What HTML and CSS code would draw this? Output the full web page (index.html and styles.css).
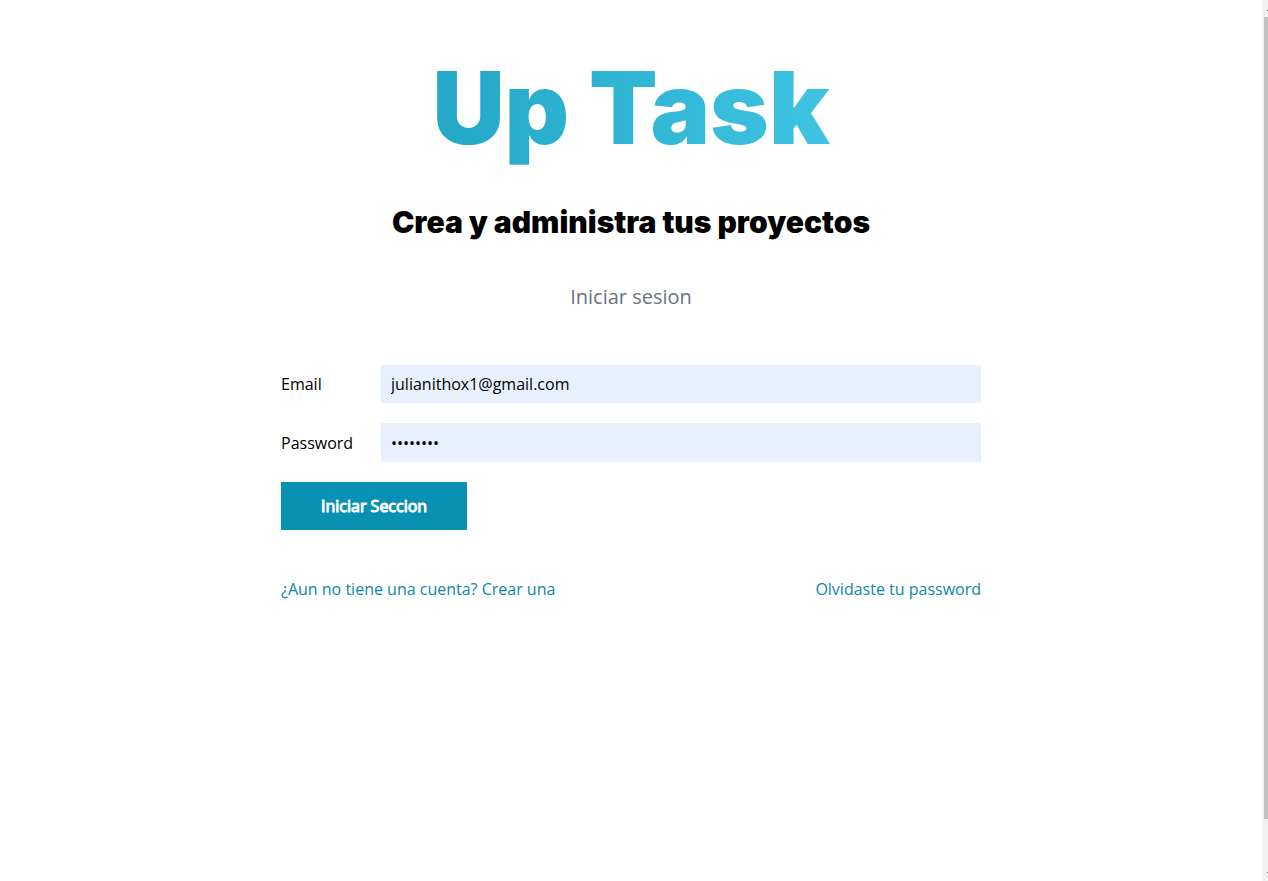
FILE: index.html
```html
<!DOCTYPE html>
<html lang="es">
<head>
<meta charset="utf-8">
<meta name="viewport" content="width=device-width, initial-scale=1">
<title>Up Task</title>
<link rel="stylesheet" href="styles.css">
</head>
<body>
<div class="page">
<main class="container">
  <h1 class="title">Up Task</h1>
  <p class="tagline">Crea y administra tus proyectos</p>
  <p class="page-name">Iniciar sesion</p>
  <form class="form">
    <div class="field">
      <label for="email">Email</label>
      <input type="email" id="email" value="julianithox1@gmail.com">
    </div>
    <div class="field">
      <label for="password">Password</label>
      <input type="password" id="password" value="password">
    </div>
    <button type="submit" class="button">Iniciar Seccion</button>
  </form>
  <nav class="actions">
    <a href="#">¿Aun no tiene una cuenta? Crear una</a>
    <a href="#">Olvidaste tu password</a>
  </nav>
</main>
<div class="scrollbar" aria-hidden="true"><span class="arrow"></span><span class="thumb"></span><span class="arrow"></span></div>
</div>
</body>
</html>
```
FILE: styles.css
```css
* { box-sizing: border-box; }
body {
  margin: 0;
  font: 16px/24px "Open Sans", sans-serif;
  color: #000;
  background: #fff;
}
.page { display: flex; min-height: 100vh; }
.container {
  width: 90%;
  max-width: 700px;
  margin: 0 auto;
  padding-top: 48px;
  text-align: center;
}
.title {
  margin: 0;
  font: 900 100px/120px Inter, sans-serif;
  font-optical-sizing: none;
  background: linear-gradient(to right, #25a9c9 25%, #40c4e4 80%);
  -webkit-background-clip: text;
  background-clip: text;
  color: transparent;
}
.tagline { margin: 30px 0; font: 900 30px/48px Inter, sans-serif; font-optical-sizing: none; }
.page-name { margin: 0 0 48px; font-size: 20px; line-height: 41px; color: #6b7280; }
.form { text-align: left; }
.field { display: flex; align-items: center; margin-bottom: 20px; }
.field label { flex: 0 0 100px; }
.field input {
  flex: 1;
  min-width: 0;
  height: 38px;
  padding: 0 10px;
  border: 0;
  background: #e8f0fe;
  font: inherit;
  color: #000;
}
.field input[type="password"] { height: 39px; }
.button {
  display: block;
  padding: 12px 40px;
  border: 0;
  background: #0891b2;
  color: #fff;
  font: 400 16px/24px "Open Sans", sans-serif;
  -webkit-text-stroke: 1px #fff;
}
.actions { display: flex; justify-content: space-between; margin-top: 47px; }
.actions a { color: #0e87a8; text-decoration: none; }
.scrollbar {
  width: 6px;
  padding-left: 1px;
  background: #f1f1f1;
  display: flex;
  flex-direction: column;
}
.arrow { height: 17px; position: relative; }
.arrow::after {
  content: "";
  position: absolute;
  right: 0;
  top: 10px;
  width: 1px;
  height: 1px;
  background: #505050;
}
.thumb { flex: 1; margin-bottom: 43px; margin-left: 1px; background: #c1c1c1; }
.arrow:last-child { height: 19px; }
```
